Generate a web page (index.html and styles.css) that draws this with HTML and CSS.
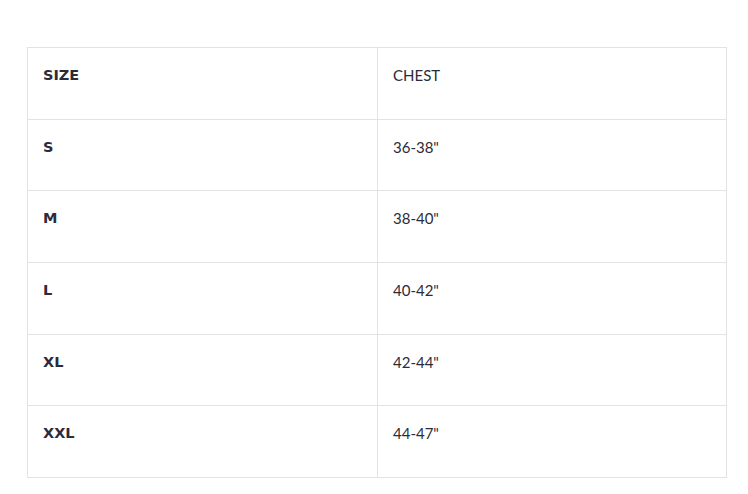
FILE: index.html
```html
<!DOCTYPE html>
<html>
<head>
<meta charset="utf-8">
<link rel="stylesheet" href="styles.css">
</head>
<body>
<div class="page">
  <table class="size-table">
    <tr><th class="c1">SIZE</th><td class="c2">CHEST</td></tr>
    <tr><th class="c1">S</th><td class="c2">36-38"</td></tr>
    <tr><th class="c1">M</th><td class="c2">38-40"</td></tr>
    <tr><th class="c1">L</th><td class="c2">40-42"</td></tr>
    <tr><th class="c1">XL</th><td class="c2">42-44"</td></tr>
    <tr><th class="c1">XXL</th><td class="c2">44-47"</td></tr>
  </table>
</div>
</body>
</html>
```
FILE: styles.css
```css
html, body {
  margin: 0;
  padding: 0;
  background: #fff;
}
.page {
  padding: 47px 0 0 27px;
  font-family: Lato, "Open Sans", sans-serif;
  color: #2c2b3a;
}
.size-table {
  border-collapse: collapse;
  width: 700px;
  table-layout: fixed;
}
.size-table th,
.size-table td {
  border: 1px solid #e3e3e3;
  height: 71.67px;
  box-sizing: border-box;
  padding: 17px 15px 0 15px;
  vertical-align: top;
  text-align: left;
  line-height: 20px;
}
.c1 {
  width: 350px;
  font-family: "DejaVu Sans", Lato, sans-serif;
  font-weight: 700;
  font-size: 14.5px;
}
.c2 {
  font-weight: 400;
  font-size: 15px;
}
```
